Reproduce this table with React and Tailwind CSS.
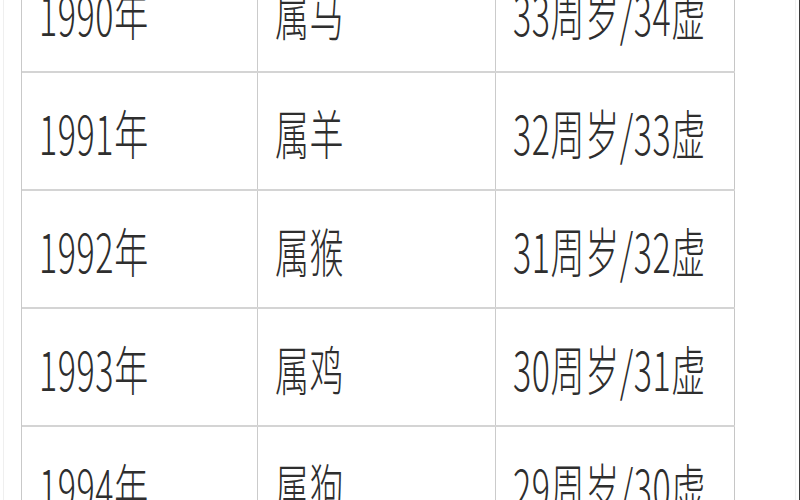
import React from 'react'

const ROWS = [
  ['1990年', '属马', '33周岁/34虚'],
  ['1991年', '属羊', '32周岁/33虚'],
  ['1992年', '属猴', '31周岁/32虚'],
  ['1993年', '属鸡', '30周岁/31虚'],
  ['1994年', '属狗', '29周岁/30虚'],
]

const Cell = ({ children, className = '' }) => (
  <div className={'flex items-center pl-[17px] pt-[4px] ' + className}>
    <span className="inline-block origin-center scale-y-[1.58] text-[34px] font-light leading-none tracking-[0.6px] text-[#2e2e2e] whitespace-nowrap">
      {children}
    </span>
  </div>
)

export default function App() {
  return (
    <div
      className="relative w-[800px] h-[500px] overflow-hidden bg-white"
      style={{ fontFamily: '"Noto Sans CJK SC", "Liberation Sans", sans-serif' }}
    >
      <div className="flex h-full">
        {/* faint left edge */}
        <div className="w-[3px] shrink-0" />
        <div className="w-px shrink-0 bg-[#efefef]" />
        <div className="w-[17px] shrink-0" />

        {/* table */}
        <div className="-mt-[47px] flex flex-col border-l border-[#c9c9c9]">
          {ROWS.map((row, i) => (
            <div
              key={i}
              className={
                'grid h-[118px] shrink-0 grid-cols-[236px_238px_239px] ' +
                (i > 0 ? 'border-t-2 border-[#d4d4d4]' : '')
              }
            >
              <Cell className="border-r border-[#cbcbcb]">{row[0]}</Cell>
              <Cell className="border-r border-[#cbcbcb]">{row[1]}</Cell>
              <Cell className="border-r border-[#c6c6c6]">{row[2]}</Cell>
            </div>
          ))}
        </div>

        <div className="flex-1" />
        <div className="w-px shrink-0 bg-[#f0f0f0]" />
        <div className="w-[3px] shrink-0" />
        <div className="w-px shrink-0 bg-[#3a3a3a]" />
      </div>
    </div>
  )
}
